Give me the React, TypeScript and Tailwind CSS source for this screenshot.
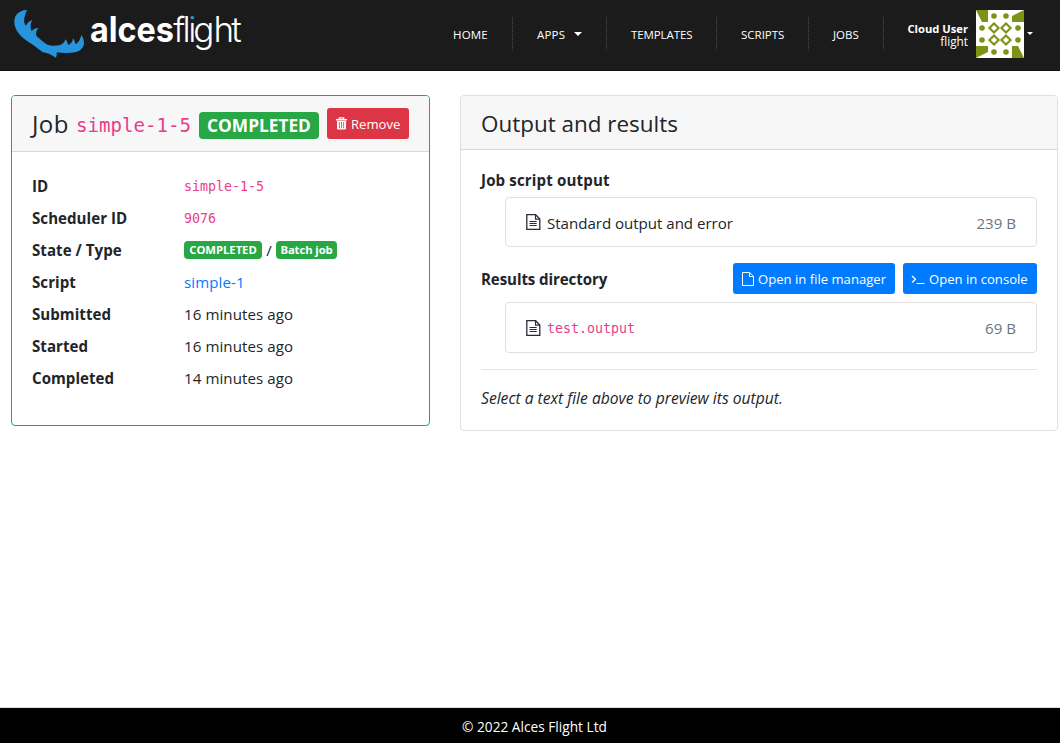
import type { ReactNode } from "react";

function Logo() {
  return (
    <svg className="block h-[71px] w-[250px]" viewBox="0 0 250 71" aria-label="alces flight">
      <defs>
        <linearGradient id="dot" gradientUnits="userSpaceOnUse" x1="0" y1="0" x2="0" y2="71">
          <stop offset=".3" stopColor="#2794db" />
          <stop offset=".3" stopColor="#fff" />
        </linearGradient>
      </defs>
      <path
        fill="#2794db"
        d="M27.200 10C22 10 18.300 12 16.200 15C13.800 18.500 13.800 23 15.400 27.500C17 32 20 35.500 24 38.700C28.500 42.200 31.500 43.500 34.500 46C38 48.500 40 50 42.300 51.900C46 52.500 51.500 54 55.800 57.700C56.800 56 57 54 56.500 52.500C62 52.700 69 53.500 75 52.300C79.500 51.200 83 48.500 83.900 44.500C84.400 41.500 83.300 37.500 81.300 35C80.500 39.500 78.500 42.500 75.300 44.300C75.300 42.500 74.700 40.500 73 38.300C72.800 41.500 71 44 68 45C67.800 42.800 67 41 65.300 39.200C64.500 42.500 62.500 44.200 60 44.900C57 45.700 53 45.900 50 45.500L49.300 44.500L48.800 45.300C46 44 43 42 40.500 39.500C37.500 36.500 36.300 36.500 36.100 34.200C36 31.500 36.800 29.500 38.700 28C35 28.200 33.300 29.300 31.800 31C30 28.500 30.300 24 32.200 20C29 21 27.300 23 26 25.800C24 23.500 23.700 20.500 24.600 17C25.200 14.500 26 12 27.200 10Z"
      />
      <text x="90" y="41.500" textLength="84" lengthAdjust="spacingAndGlyphs" fill="#fff" fontFamily="Inter, sans-serif" fontSize="35" fontWeight="750">
        alces
      </text>
      <text x="173.200 182.500 188.300 193.300 213.600 231.300" y="41.500" fill="#fff" fontFamily="Inter, sans-serif" fontSize="35" fontWeight="300">
        fl<tspan fill="url(#dot)">i</tspan>ght
      </text>
    </svg>
  );
}

function Avatar() {
  const dots = [[18, 6], [30, 6], [6, 18], [42, 18], [6, 30], [42, 30], [18, 42], [30, 42]];
  const rings = [[18, 18], [30, 18], [18, 30], [30, 30]];
  return (
    <svg className="block size-12 bg-white" viewBox="0 0 48 48">
      <g fill="#7b9413">
        <path d="M0 0H12V12H6Z" />
        <path d="M48 0V12H36V6Z" />
        <path d="M48 48H36V36H42Z" />
        <path d="M0 48V36H12V42Z" />
        {dots.map(([x, y]) => (
          <circle key={`${x}-${y}`} cx={x} cy={y} r="2.8" />
        ))}
      </g>
      {rings.map(([x, y]) => (
        <path key={`${x}-${y}`} d={`M${x} ${y - 4.600}l4.600 4.600l-4.600 4.600l-4.600 -4.600z`} fill="#fff" stroke="#7b9413" strokeWidth="2.100" />
      ))}
    </svg>
  );
}

function FileTextIcon() {
  return (
    <svg className="block h-4 w-[15px] shrink-0" viewBox="0 0 15 16" fill="none" stroke="#2b2a3a">
      <path strokeWidth="1.300" d="M.8.700H9.600L13.800 5V15.300H.8Z" />
      <path strokeWidth="1.100" d="M9.500.900V5.100H13.700" />
      <path d="M3.500 7.500H10.700M3.500 9.500H10.700M3.500 11.500H10.700" />
    </svg>
  );
}

function FileIcon() {
  return (
    <svg className="block h-[14px] w-[12px] shrink-0" viewBox="0 0 12 14" fill="none" stroke="#fff">
      <path d="M.5.500H7.700L11.500 4.300V13.500H.5Z" />
      <path d="M7.500.700V4.500H11.300" />
    </svg>
  );
}

function TerminalIcon() {
  return (
    <svg className="block h-[14px] w-[14px] shrink-0" viewBox="0 0 14 14" fill="none" stroke="#fff">
      <path strokeWidth="1.300" d="M1 4L4.500 7.200L1 10.400" />
      <path d="M5.500 11.500H13.500" />
    </svg>
  );
}

function TrashIcon() {
  return (
    <svg className="block h-[13px] w-[11px] shrink-0" viewBox="0 0 11 13">
      <path fill="none" stroke="#fff" strokeWidth="1.200" d="M3.300 2.500V.8H7.700V2.500" />
      <path fill="#fff" d="M0 2H11V3.600H0ZM1 4H10V11.500Q10 12.500 9 12.500H2Q1 12.500 1 11.500Z" />
      <path stroke="#dc3545" strokeWidth=".8" d="M3.400 5V11.300M5.500 5V11.300M7.600 5V11.300" />
    </svg>
  );
}

function Row({ label, children }: { label: string; children: ReactNode }) {
  return (
    <div className="mb-[8.1px] flex h-6 items-center">
      <div className="w-[152px] font-bold tracking-[.03px]">{label}</div>
      <div className="flex items-center">{children}</div>
    </div>
  );
}

const mono = "font-['DejaVu_Sans_Mono',monospace] text-[#e83e8c]";
const smallBadge = "mt-px flex h-[18px] items-center justify-center rounded-[4px] bg-[#28a745] text-[11.3px] font-bold text-white";
const button = "flex h-[31px] items-center rounded-[3px] text-[13.1px] text-white";

export default function App() {
  return (
    <div className="flex h-[743px] w-full flex-col overflow-hidden bg-white font-['Open_Sans','Noto_Sans',sans-serif] text-[15.1px] leading-6 text-[#212529]">
      <header className="flex h-[71px] shrink-0 border-b border-[#0f0f0f] bg-[#1b1b1b] text-white">
        <Logo />
        <nav className="ml-[179px] flex pt-[17px] text-[11.5px] *:h-[33px] *:border-r *:border-dotted *:border-[#4b4b4b] *:pl-6 *:leading-[35px]">
          <a className="w-[84px] tracking-[.2px]">HOME</a>
          <a className="flex w-[94px] items-center tracking-[.2px]">
            <span className="pt-px">APPS</span>
            <i className="ml-[9px] border-x-4 border-t-4 border-x-transparent border-t-white" />
          </a>
          <a className="w-[110px] tracking-[-0.1px]">TEMPLATES</a>
          <a className="w-[92px]">SCRIPTS</a>
          <a className="w-[75px]">JOBS</a>
        </nav>
        <div className="flex w-[84px] flex-col pt-[23px] text-right text-[11.2px] leading-3">
          <b className="whitespace-nowrap">Cloud User</b>
          <span className="text-[11.8px]">flight</span>
        </div>
        <div className="ml-2 pt-[10px]">
          <Avatar />
        </div>
        <i className="mt-8 ml-[3px] h-0 border-x-3 border-t-3 border-x-transparent border-t-white" />
      </header>

      <main className="flex flex-1 items-start pt-6 pl-[11px]">
        <section className="h-[331px] w-[419px] rounded-[4px] border border-[#28a745]">
          <div className="flex h-[56px] rounded-t-[3px] border-b border-[#d8d8d8] bg-[#f7f7f7] pl-5">
            <h4 className="mt-[13px] h-[30px] w-[44px] text-[24px] leading-[30px] tracking-[.4px]">Job</h4>
            <code className={`${mono} mt-[15px] w-[123px] text-[19.1px] leading-[30px]`}>simple-1-5</code>
            <span className="mt-4 flex h-[27px] w-[120px] items-center justify-center rounded-[4px] bg-[#28a745] text-[17.3px] font-bold text-white">
              COMPLETED
            </span>
            <button className={`${button} mt-3 ml-2 w-[82px] gap-1 bg-[#dc3545] pl-[9px]`}>
              <TrashIcon />
              <span className="pt-px">Remove</span>
            </button>
          </div>
          <div className="pt-[21.700px] pl-5">
            <Row label="ID">
              <code className={`${mono} pt-0.5 text-[13.3px]`}>simple-1-5</code>
            </Row>
            <Row label="Scheduler ID">
              <code className={`${mono} pt-0.5 text-[13.3px]`}>9076</code>
            </Row>
            <Row label="State / Type">
              <span className={`${smallBadge} w-[78px] tracking-[-0.05px]`}>COMPLETED</span>
              <span className="w-[14px] text-center">/</span>
              <span className={`${smallBadge} w-[61px] tracking-[-0.1px]`}>Batch job</span>
            </Row>
            <Row label="Script">
              <a className="tracking-[.1px] text-[#007bff]">simple-1</a>
            </Row>
            <Row label="Submitted">
              <span className="tracking-[.08px]">16 minutes ago</span>
            </Row>
            <Row label="Started">
              <span className="tracking-[.08px]">16 minutes ago</span>
            </Row>
            <Row label="Completed">
              <span className="tracking-[.08px]">14 minutes ago</span>
            </Row>
          </div>
        </section>

        <section className="ml-[30px] h-[336px] w-[598px] rounded-[4px] border border-[#dfdfdf]">
          <div className="flex h-[54px] items-center rounded-t-[3px] border-b border-[#d8d8d8] bg-[#f7f7f7] pt-[3px] pl-5">
            <h4 className="text-[22.45px] leading-[30px]">Output and results</h4>
          </div>
          <div className="px-5">
            <div className="pt-[18px] font-bold tracking-[.13px]">Job script output</div>
            <div className="mt-[5px] ml-6 flex h-[50px] items-center rounded-[4px] border border-[#dfdfdf] pr-5 pl-5">
              <FileTextIcon />
              <span className="ml-[6px] pt-0.5 tracking-[-0.03px]">Standard output and error</span>
              <span className="ml-auto pt-0.5 text-[#6c757d]">239 B</span>
            </div>
            <div className="mt-4 flex h-[31px] items-center">
              <b className="tracking-[-0.1px]">Results directory</b>
              <button className={`${button} ml-auto w-[162px] gap-1 bg-[#007bff] pl-[9px]`}>
                <FileIcon />
                <span className="whitespace-nowrap">Open in file manager</span>
              </button>
              <button className={`${button} ml-2 w-[134px] gap-1 bg-[#007bff] pl-[8px]`}>
                <TerminalIcon />
                <span className="whitespace-nowrap">Open in console</span>
              </button>
            </div>
            <div className="mt-2 ml-6 flex h-[51px] items-center rounded-[4px] border border-[#dfdfdf] pr-5 pl-5">
              <FileTextIcon />
              <code className={`${mono} ml-[6px] pt-[3px] text-[13.3px]`}>test.output</code>
              <span className="ml-auto text-[#6c757d]">69 B</span>
            </div>
            <hr className="mt-4 border-[#e5e5e5]" />
            <p className="mt-4 text-[15.65px] whitespace-nowrap">
              <em>Select a text file above to preview its output.</em>
            </p>
          </div>
        </section>
      </main>

      <footer className="h-9 shrink-0 border-t border-[#dfdfdf] bg-black pt-[7px] pl-[9px] text-center text-[13.7px] text-white">
        © 2022 Alces Flight Ltd
      </footer>
    </div>
  );
}
